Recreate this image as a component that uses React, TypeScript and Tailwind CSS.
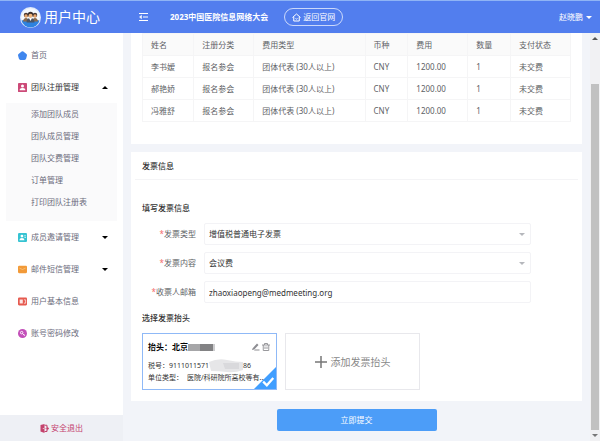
import React, { useState } from 'react';

const registrants = [
  { name: '李书嫒' },
  { name: '郝艳娇' },
  { name: '冯雅舒' },
];

const teamLinks = ['添加团队成员', '团队成员管理', '团队交费管理', '订单管理', '打印团队注册表'];

const columns = [
  { label: '姓名', width: 'w-[12%]' },
  { label: '注册分类', width: 'w-[14%]' },
  { label: '费用类型', width: 'w-[26%]' },
  { label: '币种', width: 'w-[10%]' },
  { label: '费用', width: 'w-[14%]' },
  { label: '数量', width: 'w-[10%]' },
  { label: '支付状态', width: 'w-[14%]' },
];

const HomeIcon = () => (
  <svg viewBox="0 0 16 16" className="size-[9px] shrink-0">
    <path d="M6.500 1 Q8 -.3 9.500 1 L15 5.500 Q16.300 6.800 15.800 8.500 L14.500 13.500 Q13.800 15.800 11.500 15.800 H4.500 Q2.200 15.800 1.500 13.500 L.2 8.500 Q-.3 6.800 1 5.500Z" fill="#3f86ee" />
  </svg>
);

const TeamIcon = () => (
  <svg viewBox="0 0 16 16" className="size-[9px] shrink-0">
    <rect width="16" height="16" rx="1.500" fill="#cc4a78" />
    <circle cx="8" cy="5.500" r="2.700" fill="#fff" />
    <path d="M3 13 V11.500 Q4 9 8 9 T13 11.500 V13Z" fill="#fff" />
  </svg>
);

const InviteIcon = () => (
  <svg viewBox="0 0 16 16" className="size-[9px] shrink-0">
    <rect width="16" height="16" rx="2" fill="#35c3d2" />
    <circle cx="7" cy="5.500" r="2.500" fill="#fff" />
    <path d="M2.500 13 Q2.500 9 7 9 T11.500 13Z" fill="#fff" />
    <path d="M11 5 H14 M11.500 8 H14" stroke="#fff" strokeWidth="1.300" />
  </svg>
);

const MailIcon = () => (
  <svg viewBox="0 0 16 16" className="size-[9px] shrink-0">
    <rect y="1.500" width="16" height="13" rx="2" fill="#f29a38" />
    <path d="M2.500 5.500 L8 8 L13.500 5.500" fill="none" stroke="#f9c98b" strokeWidth="1.200" />
  </svg>
);

const ProfileIcon = () => (
  <svg viewBox="0 0 16 16" className="size-[9px] shrink-0">
    <rect y="1" width="16" height="14" rx="2" fill="#e65a4f" />
    <rect x="3" y="4.500" width="5.500" height="7" fill="#fff" opacity=".85" />
    <path d="M10.500 5 H13.500 V11 H10.500" fill="none" stroke="#fff" strokeWidth="1.200" />
  </svg>
);

const PasswordIcon = () => (
  <svg viewBox="0 0 16 16" className="size-[9px] shrink-0">
    <circle cx="8" cy="8" r="8" fill="#c34fb9" />
    <circle cx="6.500" cy="6.500" r="2.200" fill="none" stroke="#fff" strokeWidth="1.600" />
    <path d="M8 8 L12 12 M11 9.500 L9.800 11" stroke="#fff" strokeWidth="1.600" />
  </svg>
);

const Logo = () => (
  <svg viewBox="0 0 42 42" className="size-[21px] shrink-0">
    <circle cx="21" cy="21" r="21" fill="#dfeafb" />
    <circle cx="21" cy="21" r="18.500" fill="#f4f8fd" />
    <path d="M3 27 Q21 22 39 27 A18.500 18.500 0 0 1 3 27Z" fill="#2d82e0" />
    <circle cx="12" cy="16" r="4.500" fill="#4a3a35" />
    <circle cx="30" cy="16" r="4.500" fill="#4a3a35" />
    <circle cx="12" cy="18" r="3.300" fill="#e8a66c" />
    <circle cx="30" cy="18" r="3.300" fill="#e8a66c" />
    <path d="M6 29 Q7 22 12 22 T18 29Z M24 29 Q25 22 30 22 T36 29Z" fill="#8a6a4d" />
    <circle cx="21" cy="15" r="5.500" fill="#3c3230" />
    <circle cx="21" cy="17.500" r="4" fill="#f0b57c" />
    <path d="M13 31 Q13 22 21 22 T29 31Z" fill="#4b5566" />
    <path d="M18 22 L21 28 L24 22Z" fill="#fff" />
  </svg>
);

const Caret = ({ up = false, className = '' }: { up?: boolean; className?: string }) => (
  <svg viewBox="0 0 8 4" className={`h-[3px] w-1.5 shrink-0 ${className}`}>
    <path d={up ? 'M0 4 L4 0 L8 4Z' : 'M0 0 L4 4 L8 0Z'} fill="currentColor" />
  </svg>
);

interface MenuItemProps {
  icon: React.ReactNode;
  label: string;
  expandable?: boolean;
  open?: boolean;
  onClick?: () => void;
}

const MenuItem: React.FC<MenuItemProps> = ({ icon, label, expandable, open, onClick }) => {
  const style = 'flex h-8 w-full items-center gap-1 pl-[18px] pr-[15px] text-left';

  if (!expandable) {
    return (
      <a href="#" className={style}>
        {icon}
        {label}
      </a>
    );
  }

  return (
    <button type="button" onClick={onClick} className={`${style} ${open ? 'text-[#333]' : ''}`}>
      {icon}
      <span className="flex-1">{label}</span>
      <Caret up={open} className="text-black" />
    </button>
  );
};

const Sidebar = () => {
  const [teamOpen, setTeamOpen] = useState(true);

  return (
    <aside className="flex w-[123px] shrink-0 flex-col bg-white text-[#6b6b7c]">
      <nav className="flex-1 pt-1.5">
        <MenuItem icon={<HomeIcon />} label="首页" />
        <MenuItem icon={<TeamIcon />} label="团队注册管理" expandable open={teamOpen} onClick={() => setTeamOpen(!teamOpen)} />
        {teamOpen && (
          <ul className="mx-1.5 bg-[#fafafb] pb-2">
            {teamLinks.map((link) => (
              <li key={link}>
                <a href="#" className="flex h-[22px] items-center pl-[25px]">{link}</a>
              </li>
            ))}
          </ul>
        )}
        <MenuItem icon={<InviteIcon />} label="成员邀请管理" expandable />
        <MenuItem icon={<MailIcon />} label="邮件短信管理" expandable />
        <MenuItem icon={<ProfileIcon />} label="用户基本信息" />
        <MenuItem icon={<PasswordIcon />} label="账号密码修改" />
      </nav>
      <button type="button" className="flex h-[26px] items-center justify-center gap-0.5 bg-[#eef0f5] text-[#c4426d]">
        <svg viewBox="0 0 18 18" className="size-[9px]">
          <path d="M1 2 L9 0 V18 L1 15Z" fill="#c4426d" />
          <path d="M9 2.500 H14 V6 M14 12 V15 H9" fill="none" stroke="#c4426d" strokeWidth="2" />
          <path d="M10.500 9 H14 M13.500 5.500 L18 9 L13.500 12.500Z" fill="#c4426d" stroke="#c4426d" />
          <circle cx="6.500" cy="9" r="1" fill="#fff" />
        </svg>
        安全退出
      </button>
    </aside>
  );
};

const Header = () => (
  <header className="flex h-[33px] shrink-0 items-center border-t border-[#8fb4f5] bg-[#527eee] text-white">
    <div className="flex w-[123px] shrink-0 items-center gap-[3px] pl-5 text-[14px]">
      <Logo />
      用户中心
    </div>
    <button type="button" aria-label="折叠菜单" className="ml-4">
      <svg viewBox="0 0 18 16" className="h-2 w-[9px]" fill="none" stroke="#fff" strokeWidth="2">
        <path d="M0 1 H18 M8 8 H18 M0 15 H18" />
        <path d="M5 4.500 L1 8 L5 11.500Z" fill="#fff" strokeWidth="1" />
      </svg>
    </button>
    <strong className="ml-[22px]">2023中国医院信息网络大会</strong>
    <a href="#" className="ml-4 flex h-[18px] items-center gap-0.5 rounded-full border border-white/70 px-[7px]">
      <svg viewBox="0 0 18 18" className="size-[9px]" fill="none" stroke="#fff" strokeWidth="2">
        <path d="M1 9 L9 2 L17 9 M3.500 8 V16 H14.500 V8 M7 11 Q9 13.500 11 11" />
      </svg>
      返回官网
    </a>
    <button type="button" className="mr-2 ml-auto flex items-center gap-[3px]">
      赵晓鹏
      <Caret />
    </button>
  </header>
);

const FeeTable = () => (
  <table className="w-full table-fixed border-collapse text-left text-[#606266]">
    <thead className="bg-[#fafafa]">
      <tr className="h-[22px]">
        {columns.map((column) => (
          <th key={column.label} className={`${column.width} border border-[#f5f5f6] pl-2 font-normal`}>{column.label}</th>
        ))}
      </tr>
    </thead>
    <tbody>
      {registrants.map(({ name }) => (
        <tr key={name} className="h-[22px]">
          {[name, '报名参会', '团体代表 (30人以上)', 'CNY', '1200.00', '1', '未交费'].map((cell, i) => (
            <td key={i} className="border border-[#f5f5f6] pl-2">{cell}</td>
          ))}
        </tr>
      ))}
    </tbody>
  </table>
);

interface FieldProps {
  id: string;
  label: string;
  children: React.ReactNode;
}

const Field: React.FC<FieldProps> = ({ id, label, children }) => (
  <div className="flex items-center gap-2">
    <label htmlFor={id} className="w-[54px] shrink-0 text-right text-[#606266]">
      <span className="text-[#f56c6c]">*</span>
      {label}
    </label>
    <div className="relative flex-1">{children}</div>
  </div>
);

const inputStyle = 'block h-[22px] w-full appearance-none rounded-xs border border-[#f3f3f6] bg-white px-1 text-[#333]';

const InvoiceCard = () => (
  <article className="relative h-[57px] w-[135px] border border-[#8fb9f7] pt-2 pl-[5px] text-[#333]">
    <div className="flex h-2.5 items-center">
      <strong className="text-black">抬头：北京</strong>
      <svg viewBox="0 0 27 7" className="h-[7px] w-[27px]">
        <rect width="27" height="7" fill="#a6a6a8" />
        <rect x="12" width="13" height="7" fill="#828284" />
        <rect x="25" width="2" height="7" fill="#cdcdcf" />
      </svg>
      <div className="mr-1.5 ml-auto flex gap-0.5 text-[#8d8d92]">
        <button type="button" aria-label="编辑">
          <svg viewBox="0 0 16 16" className="size-2" fill="currentColor">
            <path d="M1 11 L10 1 L13 4 L4.500 13 L0 14Z M6 13 H15 V15 H4Z" />
          </svg>
        </button>
        <button type="button" aria-label="删除">
          <svg viewBox="0 0 16 16" className="size-2" fill="none" stroke="currentColor" strokeWidth="1.800">
            <path d="M0 4 H16 M5 4 V1 H11 V4 M2.500 4 V15 H13.500 V4 M6 7 V12 M10 7 V12" />
          </svg>
        </button>
      </div>
    </div>
    <div className="mt-2 flex h-3 items-center text-[7px]">
      税号：9111011571
      <svg viewBox="0 0 34 16" className="h-4 w-[34px]">
        <path d="M0 4 Q9 0 18 2 T34 4 V12 Q26 15 18 14 T2 13Z" fill="#e6e6e8" />
        <path d="M14 5 H30 V11 H16Z" fill="#d9d9dc" />
      </svg>
      86
    </div>
    <p className="flex h-3 items-center gap-1 text-[7px] whitespace-nowrap">
      <span>单位类型：</span>
      <span>医院/科研院所高校等有...</span>
    </p>
    <svg viewBox="0 0 24 24" className="absolute right-0 bottom-0 size-[22px]">
      <path d="M24 0 V24 H0Z" fill="#409eff" />
      <path d="M10 16 L14 20 L21 12" fill="none" stroke="#fff" strokeWidth="2.500" />
    </svg>
  </article>
);

export default function App() {
  const [type, setType] = useState('增值税普通电子发票');
  const [content, setContent] = useState('会议费');
  const [email, setEmail] = useState('zhaoxiaopeng@medmeeting.org');

  return (
    <div className="flex h-screen flex-col overflow-hidden bg-[#f2f4f9] font-['Noto_Sans','Noto_Sans_CJK_SC',sans-serif] text-[8px] leading-3">
      <Header />
      <div className="flex min-h-0 flex-1">
        <Sidebar />
        <main className="flex min-w-0 flex-1 flex-col overflow-hidden px-2">
          <section className="bg-white px-[11px] pb-[22px]">
            <FeeTable />
          </section>

          <section className="mt-2 bg-white pb-[11px]">
            <h2 className="mx-1 flex h-7 items-center border-b border-[#f4f4f6] pl-[7px] font-medium text-[#333]">发票信息</h2>
            <div className="px-[11px] pt-[22px]">
              <h3 className="font-medium text-[#333]">填写发票信息</h3>
              <div className="mt-[9px] mr-10 flex flex-col gap-[7px]">
                <Field id="type" label="发票类型">
                  <select id="type" value={type} onChange={(e) => setType(e.target.value)} className={inputStyle}>
                    <option>增值税普通电子发票</option>
                  </select>
                  <Caret className="pointer-events-none absolute top-2.5 right-1.5 text-[#b5b7bc]" />
                </Field>
                <Field id="content" label="发票内容">
                  <select id="content" value={content} onChange={(e) => setContent(e.target.value)} className={inputStyle}>
                    <option>会议费</option>
                  </select>
                  <Caret className="pointer-events-none absolute top-2.5 right-1.5 text-[#b5b7bc]" />
                </Field>
                <Field id="email" label="收票人邮箱">
                  <input id="email" type="email" value={email} onChange={(e) => setEmail(e.target.value)} className={inputStyle} />
                </Field>
              </div>
              <h3 className="mt-[9px] font-medium text-[#333]">选择发票抬头</h3>
              <div className="mt-[9px] flex gap-2">
                <InvoiceCard />
                <button type="button" className="flex h-[57px] w-[135px] items-center justify-center gap-1 border border-[#e8e8ec] text-[10px] text-[#888]">
                  <svg viewBox="0 0 12 12" className="size-3" stroke="#777" strokeWidth="1.500">
                    <path d="M6 0 V12 M0 6 H12" />
                  </svg>
                  添加发票抬头
                </button>
              </div>
            </div>
          </section>

          <button type="button" className="mt-2 h-[22px] w-40 shrink-0 self-center rounded-xs bg-[#4c9df8] text-white">立即提交</button>
        </main>
        {/* Scrollbar */}
        <div className="flex w-2.5 shrink-0 flex-col items-center bg-[#f1f1f3]">
          <Caret up className="mt-1 text-[#555]" />
          <div className="mt-11 w-2 flex-1 bg-[#c1c1c1]" />
          <Caret className="my-1 text-[#777]" />
        </div>
      </div>
    </div>
  );
}
